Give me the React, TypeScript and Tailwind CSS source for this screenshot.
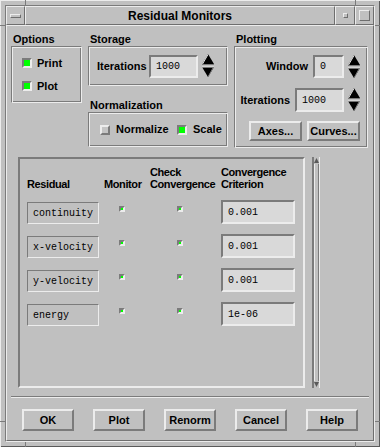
const raised = 'border-2 border-t-[#ececec] border-l-[#ececec] border-r-[#7b7b7b] border-b-[#7b7b7b]'
const sunken = 'border-2 border-t-[#7b7b7b] border-l-[#7b7b7b] border-r-[#ececec] border-b-[#ececec]'
const etched =
  'border border-t-[#7b7b7b] border-l-[#7b7b7b] border-r-[#ececec] border-b-[#ececec] shadow-[inset_1px_1px_0_#ececec,inset_-1px_-1px_0_#7b7b7b]'
const raised1 = 'border border-t-[#ececec] border-l-[#ececec] border-r-[#6e6e6e] border-b-[#6e6e6e]'

const sans = "font-['Liberation_Sans',Arial,sans-serif] font-bold text-[11px] text-black"
const mono = "font-['Liberation_Mono','Courier_New',monospace] text-[10px] text-black"

const RESIDUALS = [
  { name: 'continuity', crit: '0.001' },
  { name: 'x-velocity', crit: '0.001' },
  { name: 'y-velocity', crit: '0.001' },
  { name: 'energy', crit: '1e-06' },
]

function Toggle({ on }: { on: boolean }) {
  return on ? (
    <span className={`block h-[10px] w-[10px] shrink-0 bg-[#00ff00] ${sunken}`} />
  ) : (
    <span className={`block h-[10px] w-[10px] shrink-0 bg-[#c4c4c4] ${raised}`} />
  )
}

function SmallToggle() {
  return <span className={`block h-[6px] w-[6px] bg-[#00ff00] ${sunken}`} />
}

function Spinner() {
  return (
    <svg width="12" height="24" viewBox="0 0 12 24" className="ml-[4px] shrink-0">
      <polygon points="6,0 12,10 0,10" fill="#000" />
      <line x1="6" y1="0.5" x2="0.5" y2="10" stroke="#e8e8e8" strokeWidth="1" />
      <line x1="0" y1="10.5" x2="12" y2="10.5" stroke="#7b7b7b" strokeWidth="1" />
      <polygon points="0,13 12,13 6,23" fill="#000" />
      <line x1="0" y1="13" x2="12" y2="13" stroke="#e8e8e8" strokeWidth="1" />
      <line x1="11.5" y1="13" x2="6" y2="23" stroke="#7b7b7b" strokeWidth="1" />
    </svg>
  )
}

function Field({ value, w, h }: { value: string; w: string; h: string }) {
  return (
    <div className={`${w} ${h} ${sunken} flex items-center bg-[#d9d9d9] pl-[5px] ${mono}`}>{value}</div>
  )
}

function Button({ label, w = 'w-[52px]', h = 'h-[22px]' }: { label: string; w?: string; h?: string }) {
  return (
    <div className={`${w} ${h} ${raised} flex items-center justify-center bg-[#c0c0c0] ${sans}`}>
      {label}
    </div>
  )
}

export default function App() {
  return (
    <div className="relative h-[447px] w-[380px] bg-[#c0c0c0] p-[5px] shadow-[inset_1px_1px_0_#ececec,inset_-1px_-1px_0_#5a5a5a]">
      {/* frame corner ticks */}
      <span className="absolute left-[25px] top-0 h-[5px] w-px bg-[#7b7b7b]" />
      <span className="absolute left-[355px] top-0 h-[5px] w-px bg-[#7b7b7b]" />
      <span className="absolute bottom-0 left-[25px] h-[5px] w-px bg-[#7b7b7b]" />
      <span className="absolute bottom-0 left-[355px] h-[5px] w-px bg-[#7b7b7b]" />
      <span className="absolute left-0 top-[25px] h-px w-[5px] bg-[#7b7b7b]" />
      <span className="absolute right-0 top-[25px] h-px w-[5px] bg-[#7b7b7b]" />
      <span className="absolute bottom-[25px] left-0 h-px w-[5px] bg-[#7b7b7b]" />
      <span className="absolute bottom-[25px] right-0 h-px w-[5px] bg-[#7b7b7b]" />

      <div className="flex h-full w-full flex-col border border-t-[#7b7b7b] border-l-[#7b7b7b] border-r-[#ececec] border-b-[#ececec]">
        {/* title bar */}
        <div className="flex h-[19px] shrink-0">
          <div className={`flex w-[19px] items-center justify-center ${raised1}`}>
            <span className={`block h-[4px] w-[11px] ${raised1}`} />
          </div>
          <div
            className={`flex flex-1 items-center justify-center ${raised1} font-['Liberation_Sans',Arial,sans-serif] text-[12px] font-bold text-black`}
          >
            Residual Monitors
          </div>
          <div className={`flex w-[20px] items-center justify-center ${raised1}`}>
            <span className={`block h-[5px] w-[5px] ${raised1}`} />
          </div>
          <div className={`flex w-[19px] items-center justify-center ${raised1}`}>
            <span className={`block h-[11px] w-[11px] ${raised1}`} />
          </div>
        </div>

        {/* content */}
        <div className={`flex-1 ${raised1} pl-[4px] pt-[6px]`}>
          {/* top row */}
          <div className="flex items-start">
            <div className="w-[71px]">
              <div className={`h-[14px] pl-[2px] leading-[14px] ${sans}`}>Options</div>
              <div className={`h-[57px] ${etched} flex flex-col gap-[9px] pl-[10px] pt-[9px]`}>
                <div className="flex h-[14px] items-center gap-[5px]">
                  <Toggle on />
                  <span className={sans}>Print</span>
                </div>
                <div className="flex h-[14px] items-center gap-[5px]">
                  <Toggle on />
                  <span className={sans}>Plot</span>
                </div>
              </div>
            </div>

            <div className="ml-[6px] w-[140px]">
              <div className={`h-[14px] pl-[2px] leading-[14px] ${sans}`}>Storage</div>
              <div className={`h-[40px] ${etched} flex items-center pl-[8px]`}>
                <span className={`w-[52px] ${sans}`}>Iterations</span>
                <Field value="1000" w="w-[49px]" h="h-[23px]" />
                <Spinner />
              </div>
              <div className={`mt-[12px] h-[14px] pl-[2px] leading-[14px] ${sans}`}>Normalization</div>
              <div className={`h-[35px] ${etched} flex items-center pl-[11px]`}>
                <div className="flex w-[77px] items-center gap-[6px]">
                  <Toggle on={false} />
                  <span className={sans}>Normalize</span>
                </div>
                <div className="flex items-center gap-[6px]">
                  <Toggle on />
                  <span className={sans}>Scale</span>
                </div>
              </div>
            </div>

            <div className="ml-[6px] w-[134px]">
              <div className={`h-[14px] pl-[2px] leading-[14px] ${sans}`}>Plotting</div>
              <div className={`h-[102px] ${etched} flex flex-col items-end pr-[7px] pt-[8px]`}>
                <div className="flex h-[23px] items-center">
                  <span className={`mr-[5px] ${sans}`}>Window</span>
                  <Field value="0" w="w-[31px]" h="h-[23px]" />
                  <Spinner />
                </div>
                <div className="mt-[10px] flex h-[24px] items-center">
                  <span className={`mr-[5px] ${sans}`}>Iterations</span>
                  <Field value="1000" w="w-[49px]" h="h-[24px]" />
                  <Spinner />
                </div>
                <div className="mt-[9px] flex gap-[5px]">
                  <Button label="Axes..." w="w-[53px]" h="h-[20px]" />
                  <Button label="Curves..." w="w-[53px]" h="h-[20px]" />
                </div>
              </div>
            </div>
          </div>

          {/* residual table */}
          <div className="mt-[9px] flex">
            <div className={`ml-[7px] h-[231px] w-[287px] ${sunken} pl-[7px] pt-[7px]`}>
              <div
                className={`grid grid-cols-[77px_46px_71px_74px] items-end leading-[12px] tracking-[-0.4px] ${sans}`}
              >
                <div>Residual</div>
                <div>Monitor</div>
                <div>
                  Check
                  <br />
                  Convergence
                </div>
                <div>
                  Convergence
                  <br />
                  Criterion
                </div>
              </div>
              {RESIDUALS.map((r) => (
                <div key={r.name} className="mt-[10px] grid h-[24px] grid-cols-[77px_46px_71px_74px]">
                  <div
                    className={`flex h-[22px] w-[72px] items-center self-end border border-t-[#7b7b7b] border-l-[#7b7b7b] border-r-[#ececec] border-b-[#ececec] pl-[5px] ${mono}`}
                  >
                    {r.name}
                  </div>
                  <div className="ml-[15px] mt-[6px]">
                    <SmallToggle />
                  </div>
                  <div className="ml-[27px] mt-[6px]">
                    <SmallToggle />
                  </div>
                  <Field value={r.crit} w="w-[74px]" h="h-[24px]" />
                </div>
              ))}
            </div>
            <div className="ml-[7px] flex h-[231px] w-[8px] flex-col border-l-2 border-r border-l-[#7b7b7b] border-r-[#ececec]">
              <div className="flex h-[7px] items-center justify-center">
                <svg width="5" height="5" viewBox="0 0 5 5">
                  <polygon points="2.5,0 5,5 0,5" fill="#5a5a5a" />
                </svg>
              </div>
              <div className="flex-1 border-l border-r border-l-[#ececec] border-r-[#7b7b7b]" />
              <div className="flex h-[7px] items-center justify-center">
                <svg width="5" height="5" viewBox="0 0 5 5">
                  <polygon points="0,0 5,0 2.5,5" fill="#5a5a5a" />
                </svg>
              </div>
            </div>
          </div>

          {/* separator */}
          <div className="mt-[8px] h-[2px] w-[358px] border-t border-b border-t-[#7b7b7b] border-b-[#ececec]" />

          {/* buttons */}
          <div className="ml-[11px] mt-[11px] flex gap-[19px]">
            <Button label="OK" />
            <Button label="Plot" />
            <Button label="Renorm" />
            <Button label="Cancel" />
            <Button label="Help" />
          </div>
        </div>
      </div>
    </div>
  )
}
